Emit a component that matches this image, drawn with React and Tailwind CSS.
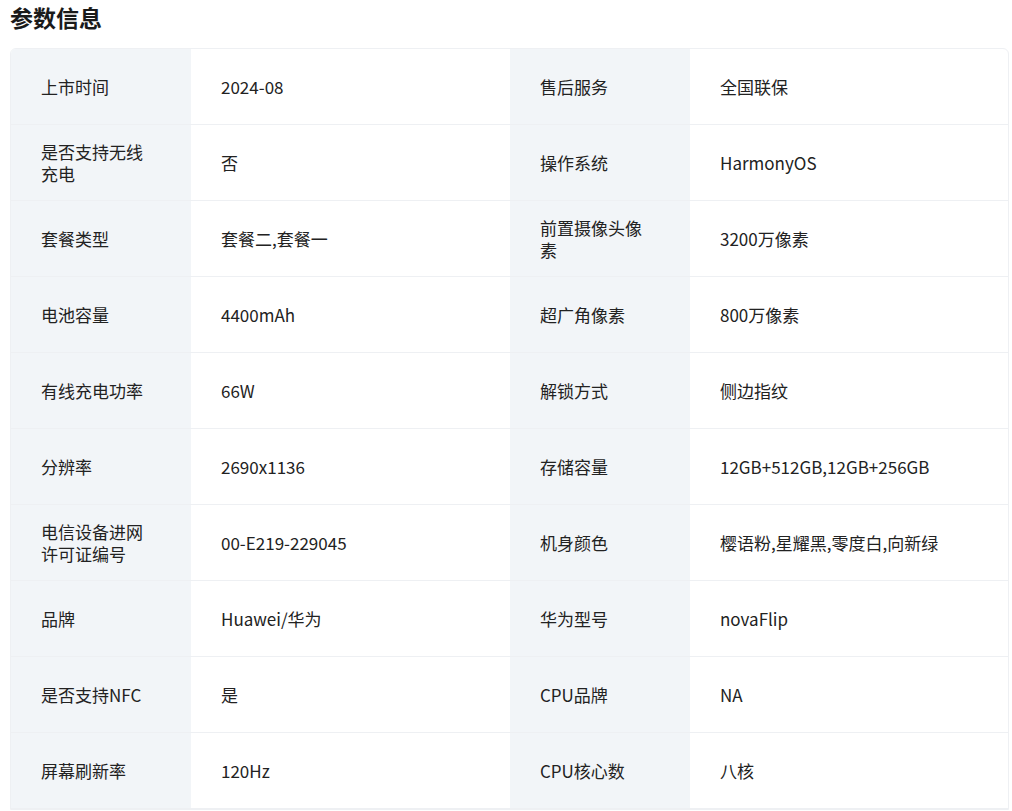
const rows=[["上市时间","2024-08","售后服务","全国联保"],["是否支持无线充电","否","操作系统","HarmonyOS"],["套餐类型","套餐二,套餐一","前置摄像头像素","3200万像素"],["电池容量","4400mAh","超广角像素","800万像素"],["有线充电功率","66W","解锁方式","侧边指纹"],["分辨率","2690x1136","存储容量","12GB+512GB,12GB+256GB"],["电信设备进网许可证编号","00-E219-229045","机身颜色","樱语粉,星耀黑,零度白,向新绿"],["品牌","Huawei/华为","华为型号","novaFlip"],["是否支持NFC","是","CPU品牌","NA"],["屏幕刷新率","120Hz","CPU核心数","八核"]];
export default function App(){return(<div className="bg-white w-[1012px] h-[811px] overflow-hidden" style={{fontFamily:'"Noto Sans CJK SC","Noto Sans",sans-serif'}}>
<h2 className="px-[10px] h-[34px] flex items-center text-[23px] font-bold text-[#1a1a1a] leading-none">参数信息</h2>
<div className="ml-[10px] w-[999px] mt-[14px] border border-[#eef0f3] rounded-t-md overflow-hidden">
{rows.map((r,i)=>(<div key={i} className="flex h-[76px] border-b border-[#eef0f3] text-[17px] text-[#222]">
<div className="w-[180px] bg-[#f2f5f8] pl-[30px] pr-[40px] flex items-center leading-[22px]">{r[0]}</div>
<div className="w-[319px] pl-[30px] flex items-center">{r[1]}</div>
<div className="w-[180px] bg-[#f2f5f8] pl-[30px] pr-[40px] flex items-center leading-[22px]">{r[2]}</div>
<div className="flex-1 pl-[30px] flex items-center">{r[3]}</div>
</div>))}
</div></div>)}
